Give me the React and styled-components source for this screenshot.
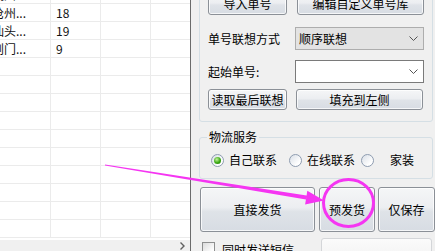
import React from "react";
import styled, { createGlobalStyle } from "styled-components";

const GlobalStyle = createGlobalStyle`
  html, body {
    margin: 0;
    padding: 0;
    background: #f0f0f0;
  }
  body {
    font-family: "Noto Sans CJK SC", "Liberation Sans", sans-serif;
    color: #000;
  }
`;

const Window = styled.div`
  position: relative;
  display: flex;
  width: 435px;
  height: 251px;
  overflow: hidden;
  background: #f0f0f0;
`;

// ---- left data grid ----
const GridPane = styled.div`
  width: 190px;
  flex: none;
  display: flex;
  flex-direction: column;
  background: #fff;
  border-right: 1px solid #6b6b6b;
`;

const RowsViewport = styled.div`
  flex: 1;
  overflow: hidden;
  padding-bottom: 2px;
`;

const RowList = styled.div`
  margin: -14px 0 0 -8px;
`;

const GridRow = styled.div`
  display: flex;
  height: 18px;
  box-sizing: border-box;
  border-bottom: 1px solid #ebebeb;
`;

const Cell = styled.div`
  box-sizing: border-box;
  width: ${(p) => (p.$w ? `${p.$w}px` : "auto")};
  flex: ${(p) => (p.$w ? "none" : "1")};
  border-right: ${(p) => (p.$w ? "1px solid #ebebeb" : "none")};
  padding-left: ${(p) => p.$pad || 0}px;
  font: 12px/17px "Noto Sans CJK SC", "Liberation Sans", sans-serif;
  color: #111;
  white-space: nowrap;
  overflow: hidden;
`;

const HScroll = styled.div`
  height: 11px;
  flex: none;
  display: flex;
  align-items: center;
  justify-content: flex-end;
  padding-right: 5px;
  background: #f0f0f0;
`;

// ---- right side panel ----
const Side = styled.div`
  flex: 1;
  display: flex;
  flex-direction: column;
  padding: 0 2px 0 8px;
  min-width: 0;
`;

const Group = styled.div`
  border: 1px solid #d5dfe5;
  border-radius: 3px;
  padding: 12px 0 11px 8px;
  margin-top: -20px;
`;

const Fieldset = styled.fieldset`
  margin: 8px 0 0 0;
  padding: 0 0 10px 7px;
  min-width: 0;
  border: 1px solid #d5dfe5;
  border-radius: 3px;
`;

const Legend = styled.legend`
  padding: 0 2px;
  font-size: 12px;
  line-height: 14px;
`;

const Row = styled.div`
  display: flex;
  align-items: ${(p) => p.$align || "center"};
  gap: ${(p) => p.$gap || 0}px;
  margin-top: ${(p) => p.$mt || 0}px;
  margin-left: ${(p) => p.$ml || 0}px;
`;

const Label = styled.span`
  width: ${(p) => (p.$w ? `${p.$w}px` : "auto")};
  flex: none;
  font-size: 12px;
  line-height: 16px;
  white-space: nowrap;
`;

const Btn = styled.button`
  box-sizing: border-box;
  width: ${(p) => p.$w}px;
  height: ${(p) => p.$h}px;
  flex: none;
  padding: 0;
  border: 1px solid #8b9097;
  border-radius: 3px;
  background: linear-gradient(#f5f6f7, #eceef1 45%, #dfe3e8 55%, #d7dce3);
  box-shadow: inset 0 0 0 1px rgba(255, 255, 255, 0.75);
  font: 12px/1 "Noto Sans CJK SC", sans-serif;
  color: #000;
  white-space: nowrap;
`;

const GhostBtn = styled(Btn)`
  border-color: #d4d6d9;
  background: linear-gradient(#fbfbfb, #f2f2f2);
  box-shadow: none;
`;

const Combo = styled.div`
  box-sizing: border-box;
  width: 129px;
  height: 23px;
  flex: none;
  display: flex;
  align-items: center;
  justify-content: space-between;
  padding: 0 5px 0 3px;
  border: 1px solid ${(p) => (p.$readonly ? "#adadad" : "#7a7a7a")};
  background: ${(p) => (p.$readonly ? "#e3e3e3" : "#fff")};
  font-size: 12px;
  line-height: 16px;
`;

const RadioItem = styled.label`
  display: flex;
  align-items: center;
  gap: ${(p) => p.$gap || 5}px;
  margin-left: ${(p) => p.$ml || 0}px;
  font-size: 12px;
  line-height: 16px;
  white-space: nowrap;
`;

const RadioDot = styled.span`
  box-sizing: border-box;
  width: 13px;
  height: 13px;
  border-radius: 50%;
  border: 1px solid #8e9cb0;
  background: linear-gradient(135deg, #d9dfe7, #ffffff 75%);
  display: flex;
  align-items: center;
  justify-content: center;

  &::after {
    content: "";
    display: ${(p) => (p.$on ? "block" : "none")};
    width: 7px;
    height: 7px;
    border-radius: 50%;
    background: radial-gradient(circle at 40% 35%, #c4f29e, #3aa812 55%, #1d7a06);
  }
`;

const CheckBox = styled.span`
  box-sizing: border-box;
  width: 13px;
  height: 13px;
  flex: none;
  margin-top: 4px;
  border: 1px solid #8e8f8f;
  background: linear-gradient(135deg, #dcdcdc, #fff 80%);
`;

const CheckLabel = styled(Label)`
  margin: 4px 0 0 7px;
`;

const Overlay = styled.svg`
  position: absolute;
  left: 0;
  top: 0;
  pointer-events: none;
`;

const Chevron = ({ color = "#555" }) => (
  <svg width="9" height="5" viewBox="0 0 9 5">
    <path d="M0.5 0.5 L4.5 4.5 L8.5 0.5" fill="none" stroke={color} strokeWidth="1" />
  </svg>
);

const rows = [
  ["杭州...", ""],
  ["沧州...", "18"],
  ["汕头...", "19"],
  ["荆门...", "9"],
  ...Array.from({ length: 10 }, () => ["", ""]),
];

export default function App() {
  return (
    <>
      <GlobalStyle />
      <Window>
        <GridPane>
          <RowsViewport>
            <RowList>
              {rows.map((r, i) => (
                <GridRow key={i}>
                  <Cell $w={59}>{r[0]}</Cell>
                  <Cell $w={50} $pad={5}>
                    {r[1]}
                  </Cell>
                  <Cell $w={50} />
                  <Cell />
                </GridRow>
              ))}
            </RowList>
          </RowsViewport>
          <HScroll>
            <svg width="5" height="8" viewBox="0 0 5 8">
              <path d="M0.5 0.5 L4 4 L0.5 7.5" fill="none" stroke="#606060" strokeWidth="1.4" />
            </svg>
          </HScroll>
        </GridPane>

        <Side>
          <Group>
            <Row $gap={10}>
              <Btn $w={79} $h={22}>导入单号</Btn>
              <Btn $w={127} $h={22}>编辑自定义单号库</Btn>
            </Row>
            <Row $mt={12}>
              <Label $w={87}>单号联想方式</Label>
              <Combo $readonly>
                <span>顺序联想</span>
                <Chevron />
              </Combo>
            </Row>
            <Row $mt={10}>
              <Label $w={87}>起始单号:</Label>
              <Combo>
                <span />
                <Chevron />
              </Combo>
            </Row>
            <Row $mt={6} $gap={9}>
              <Btn $w={79} $h={21}>读取最后联想</Btn>
              <Btn $w={127} $h={21}>填充到左侧</Btn>
            </Row>
          </Group>

          <Fieldset>
            <Legend>物流服务</Legend>
            <Row $mt={8} $ml={4}>
              <RadioItem>
                <RadioDot $on />
                自己联系
              </RadioItem>
              <RadioItem $ml={12}>
                <RadioDot />
                在线联系
              </RadioItem>
              <RadioItem $ml={6} $gap={16}>
                <RadioDot />
                家装
              </RadioItem>
            </Row>
          </Fieldset>

          <Row $mt={8} $ml={1}>
            <Btn $w={115} $h={45}>直接发货</Btn>
            <Btn $w={56} $h={45} style={{ marginLeft: 4 }}>预发货</Btn>
            <Btn $w={57} $h={45} style={{ marginLeft: 3 }}>仅保存</Btn>
          </Row>

          <Row $mt={6} $ml={3} $align="flex-start">
            <CheckBox />
            <CheckLabel>同时发送短信</CheckLabel>
            <GhostBtn $w={111} $h={24} style={{ marginLeft: "auto", marginRight: 1 }} />
          </Row>
        </Side>

        <Overlay width="435" height="251" viewBox="0 0 435 251">
          <polygon
            points="105,164.5 105,165.5 306,199.6 307.3,190.7 324,200.5 305.1,204.5 306.6,195.6"
            fill="#f535f2"
          />
          <ellipse cx="348.5" cy="203" rx="25" ry="23.5" fill="none" stroke="#f535f2" strokeWidth="3" />
        </Overlay>
      </Window>
    </>
  );
}
